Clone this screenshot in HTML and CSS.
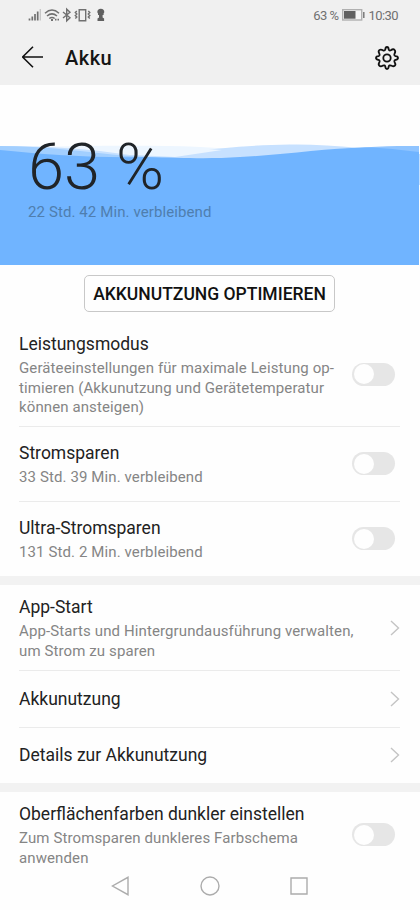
FILE: index.html
```html
<!DOCTYPE html>
<html lang="de">
<head>
<meta charset="utf-8">
<title>Akku</title>
<link rel="stylesheet" href="styles.css">
</head>
<body>
<div class="screen">
  <header class="top">
    <div class="status">
      <svg class="status-icons" width="80" height="16" viewBox="0 0 80 16" fill="none" stroke="#707070">
        <path d="M2.500 11.500v2M5.300 9.500v4M8 7v6.500M10.700 4.500v9" stroke-width="1.700"/>
        <path d="M13.300 2v11.500" stroke="#c4c4c4" stroke-width="1.300"/>
        <path d="M18 6.200q7-6.400 14 0M20 9q5-4.200 10 0M22.300 11.500q2.700-2.200 5.400 0" stroke-width="1.500"/>
        <path d="M24 13h2M28 12.700h1.500M30.500 12.700h1.500" stroke-width="1.800"/>
        <path d="M36 5l7 5.700-3.300 3.100V2.200L43 5.300 36 11" stroke-width="1.400"/>
        <path d="M52.200 2.700h6.500v11h-6.500zM49.800 4l-1.500 1.500 1.500 1.500-1.500 1.500 1.500 1.500-1.500 1.500M61.300 4l1.500 1.500L61.300 7l1.500 1.500-1.500 1.500 1.500 1.500" stroke-width="1.400"/>
        <path d="M70.500 14v-2.500l1.500-1V8h-1V6.500l-.700-1.300q0-3.500 3.500-3.500t3.500 3.500l-.700 1.300V8h-1v2.500l1.500 1V14z" fill="#606060" stroke="none"/>
      </svg>
      <div class="status-right">
        <span>63 %</span>
        <svg width="23" height="12" viewBox="0 0 23 12">
          <rect x=".7" y=".7" width="19" height="10.300" fill="#f5f5f5" stroke="#b0b0b0" stroke-width="1.400"/>
          <rect x="2" y="2" width="11.500" height="7.700" fill="#606060"/>
          <path d="M21.800 3v6" stroke="#707070" stroke-width="1.400"/>
        </svg>
        <span>10:30</span>
      </div>
    </div>
    <div class="bar">
      <svg class="back" width="22" height="22" viewBox="0 0 22 22" fill="none" stroke="#111" stroke-width="1.600"><path d="M21 11H1M11 .800L.600 11 11 21.200"/></svg>
      <h1>Akku</h1>
      <svg class="gear" width="24" height="24" viewBox="0 0 24 24" fill="none" stroke="#111" stroke-width="1.800" stroke-linejoin="round">
        <path d="M10.300 3.500Q10.500 1 12 1T13.700 3.500Q14.300 5 15.800 4.300Q18.300 2.400 19.600 4T19.500 7.700Q18.800 9.600 20.500 10.200Q23 10.500 23 12T20.500 13.800Q18.800 14.400 19.600 16.200Q21.200 18.500 19.700 19.700T16 19.600Q14.300 18.800 13.700 20.500Q13.500 23 12 23T10.300 20.500Q9.700 18.800 8 19.600Q5.600 21.200 4.300 19.700T4.400 16.200Q5.200 14.400 3.500 13.800Q1 13.500 1 12T3.500 10.200Q5.200 9.600 4.400 7.800Q2.900 5.500 4.300 4.200T8 4.300Q9.700 5 10.300 3.500Z"/>
        <circle cx="12" cy="12" r="3.700"/>
      </svg>
    </div>
  </header>

  <section class="hero">
    <svg class="wave" width="420" height="180" viewBox="0 0 420 180" preserveAspectRatio="none">
      <path d="M30 62C90 61 150 60 200 62C250 65 320 66 340 80V100H30Z" fill="#edf6ff"/>
      <path d="M0 61C50 61 90 64 130 70C180 69 230 60 290 59.500C335 59 375 65 420 69V100H0Z" fill="#c7e1ff"/>
      <path d="M90 63.500C130 60 190 62 222 65L175 72L135 70Z" fill="#edf6ff"/>
      <path d="M0 61C45 61 85 67 128 71L170 73V90H0Z" fill="#a2cfff"/>
      <path d="M330 66C365 61 390 61 419 61V85H330Z" fill="#8fc4ff"/>
      <path d="M0 65C50 70 95 73 145 72C185 73 210 74 240 72C285 70 325 63 365 62.500C385 62.500 400 65 419 67V180H0Z" fill="#70b4ff"/>
    </svg>
    <div class="level">63 %</div>
    <div class="remain">22 Std. 42 Min. verbleibend</div>
  </section>

  <div class="action"><button class="optimize">AKKUNUTZUNG OPTIMIEREN</button></div>

  <section class="group">
    <div class="row first">
      <div class="text"><h2>Leistungsmodus</h2><p>Geräteeinstellungen für maximale Leistung op-<br>timieren (Akkunutzung und Gerätetemperatur<br>können ansteigen)</p></div>
      <span class="switch"></span>
    </div>
    <div class="row">
      <div class="text"><h2>Stromsparen</h2><p>33 Std. 39 Min. verbleibend</p></div>
      <span class="switch"></span>
    </div>
    <div class="row ultra">
      <div class="text"><h2>Ultra-Stromsparen</h2><p>131 Std. 2 Min. verbleibend</p></div>
      <span class="switch"></span>
    </div>
  </section>

  <section class="group">
    <div class="row tall">
      <div class="text"><h2>App-Start</h2><p>App-Starts und Hintergrundausführung verwalten,<br>um Strom zu sparen</p></div>
      <svg class="chevron" width="10" height="16" viewBox="0 0 10 16"><path d="M1 1l7.500 7L1 15"/></svg>
    </div>
    <div class="row single">
      <div class="text"><h2>Akkunutzung</h2></div>
      <svg class="chevron" width="10" height="16" viewBox="0 0 10 16"><path d="M1 1l7.500 7L1 15"/></svg>
    </div>
    <div class="row single">
      <div class="text"><h2>Details zur Akkunutzung</h2></div>
      <svg class="chevron" width="10" height="16" viewBox="0 0 10 16"><path d="M1 1l7.500 7L1 15"/></svg>
    </div>
  </section>

  <section class="group">
    <div class="row last">
      <div class="text"><h2>Oberflächenfarben dunkler einstellen</h2><p>Zum Stromsparen dunkleres Farbschema<br>anwenden</p></div>
      <span class="switch"></span>
    </div>
  </section>

  <nav class="nav">
    <svg width="20" height="20" viewBox="0 0 20 20"><path d="M17 1.300v17.400L1.500 10z"/></svg>
    <svg width="20" height="20" viewBox="0 0 20 20"><circle cx="10" cy="10" r="9"/></svg>
    <svg width="20" height="20" viewBox="0 0 20 20"><path d="M2 2h16v16H2z"/></svg>
  </nav>
</div>
</body>
</html>
```
FILE: styles.css
```css
* { box-sizing: border-box; }
body { margin: 0; background: #fefefe; font-family: Roboto, "Liberation Sans", sans-serif; color: #222; }
h1, h2, p { margin: 0; font-weight: 400; }
svg { display: block; flex: none; }
.screen { width: 420px; height: 910px; overflow: hidden; display: flex; flex-direction: column; }
.top { height: 85px; flex: none; background: #f0f0f0; }
.status { height: 30px; padding: 0 22px 0 27px; display: flex; align-items: center; justify-content: space-between; }
.status-right { display: flex; align-items: center; gap: 3.500px; font-size: 13px; letter-spacing: -.55px; color: #707070; white-space: nowrap; }
.bar { height: 55px; padding: 0 21px 0 22px; display: flex; align-items: center; }
.back { margin-bottom: 2px; }
.bar h1 { margin-left: 21px; padding-top: 1px; font-size: 20px; font-weight: 500; letter-spacing: .5px; color: #151515; line-height: 54px; }
.gear { margin-left: auto; }
.hero { position: relative; height: 180px; flex: none; padding: 51px 28px 0; }
.wave { position: absolute; left: 0; top: 0; z-index: -1; }
.level { font-size: 65px; font-weight: 300; line-height: 62px; white-space: nowrap; color: #202428; }
.remain { margin-top: 4px; font-size: 15px; letter-spacing: .1px; line-height: 20px; color: #4f7eae; white-space: nowrap; }
.action { height: 47px; flex: none; padding: 10px 1px 0 0; display: flex; justify-content: center; align-items: flex-start; }
.optimize { width: 251px; height: 37px; padding: 1px 0 0; border: 1px solid #c8c8c8; border-radius: 5px; background: #fefefe; font: 500 17.500px/34px Roboto, sans-serif; color: #111; white-space: nowrap; }
.group { flex: none; padding: 0 20px 0 19px; }
.group + .group { border-top: 9px solid #f2f2f2; }
.row { height: 74.500px; display: flex; align-items: center; justify-content: space-between; }
.row + .row { border-top: 1px solid #ebebeb; }
.first { height: 114px; padding-top: 10px; }
.ultra { height: 75.500px; }
.tall { height: 85px; }
.single { height: 56.500px; }
.last { height: 85px; }
.text { padding-top: 1px; white-space: nowrap; }
.text h2 { font-size: 17.500px; line-height: 24px; }
.single .text { padding-top: 0; }
.text p { margin: 3px 0 -1px; font-size: 15px; letter-spacing: .11px; line-height: 19.700px; color: #858585; }
.switch { width: 43px; height: 23px; margin-right: 5px; padding: 1.500px; border-radius: 12px; background: #e6e6e6; flex: none; }
.switch::before { content: ""; display: block; width: 20px; height: 20px; border-radius: 50%; background: #fefefe; }
.chevron { fill: none; stroke: #c4c4c4; stroke-width: 1.400; }
.nav { flex: none; height: 20px; margin-top: -1px; display: flex; justify-content: center; gap: 69px; fill: none; stroke: #acacac; stroke-width: 1.400; }
```
